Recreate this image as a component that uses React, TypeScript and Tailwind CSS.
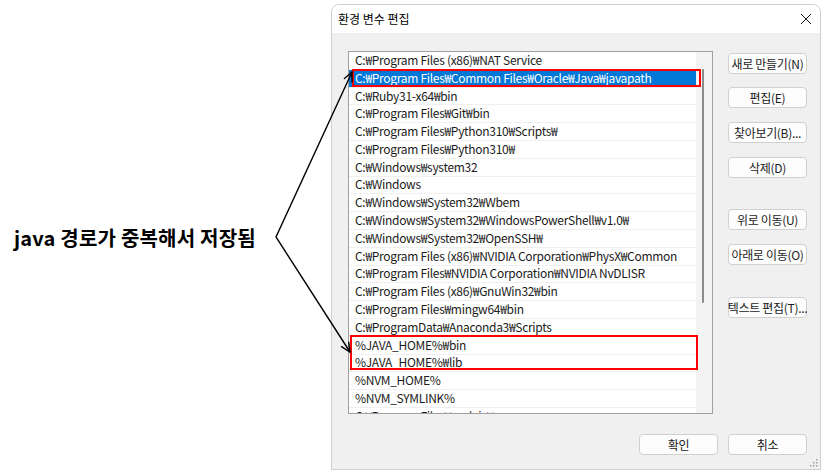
import React from "react"

const paths = [
  "C:₩Program Files (x86)₩NAT Service",
  "C:₩Program Files₩Common Files₩Oracle₩Java₩javapath",
  "C:₩Ruby31-x64₩bin",
  "C:₩Program Files₩Git₩bin",
  "C:₩Program Files₩Python310₩Scripts₩",
  "C:₩Program Files₩Python310₩",
  "C:₩Windows₩system32",
  "C:₩Windows",
  "C:₩Windows₩System32₩Wbem",
  "C:₩Windows₩System32₩WindowsPowerShell₩v1.0₩",
  "C:₩Windows₩System32₩OpenSSH₩",
  "C:₩Program Files (x86)₩NVIDIA Corporation₩PhysX₩Common",
  "C:₩Program Files₩NVIDIA Corporation₩NVIDIA NvDLISR",
  "C:₩Program Files (x86)₩GnuWin32₩bin",
  "C:₩Program Files₩mingw64₩bin",
  "C:₩ProgramData₩Anaconda3₩Scripts",
  "%JAVA_HOME%₩bin",
  "%JAVA_HOME%₩lib",
  "%NVM_HOME%",
  "%NVM_SYMLINK%",
  "C:₩Program Files₩nodejs₩",
]

const sideButtons = [
  { label: "새로 만들기(N)", mt: "mt-[2px]" },
  { label: "편집(E)", mt: "mt-[13px]" },
  { label: "찾아보기(B)...", mt: "mt-[14px]" },
  { label: "삭제(D)", mt: "mt-[14px]" },
  { label: "위로 이동(U)", mt: "mt-[31px]" },
  { label: "아래로 이동(O)", mt: "mt-[14px]" },
  { label: "텍스트 편집(T)...", mt: "mt-[32px]" },
]

function WinButton({ label, className = "" }: { label: string; className?: string }) {
  return (
    <div
      className={`flex h-[21px] w-[79px] items-center justify-center whitespace-nowrap rounded-[4px] border border-[#d0d0d0] bg-[#fdfdfd] text-[12px] tracking-[-0.3px] text-[#1b1b1b] ${className}`}
    >
      {label}
    </div>
  )
}

export default function App() {
  return (
    <div
      className="relative flex h-[474px] w-[825px] overflow-hidden bg-white"
      style={{ fontFamily: '"Noto Sans CJK KR", "Liberation Sans", sans-serif' }}
    >
      <div className="flex w-[331px] shrink-0 items-center pl-[14px]">
        <span className="mt-[2px] text-[20px] font-bold tracking-[0.2px] text-black">java 경로가 중복해서 저장됨</span>
      </div>

      <div className="mt-[4px] flex h-[466px] w-[490px] flex-col overflow-hidden rounded-t-[8px] border border-[#cfcfcf] bg-[#f0f0f0]">
        <div className="flex h-[28px] shrink-0 items-center justify-between bg-white pl-[6px] pr-[8px]">
          <span className="text-[12px] text-black">환경 변수 편집</span>
          <svg width="12" height="12" viewBox="0 0 12 12">
            <path d="M1 1L11 11M11 1L1 11" stroke="#1b1b1b" strokeWidth="1" />
          </svg>
        </div>

        <div className="relative flex flex-1 flex-col pl-[16px] pr-[13px] pt-[18px]">
          <div className="flex gap-[15px]">
            <div className="flex h-[363px] w-[366px] overflow-hidden border border-[#a0a0a0] bg-white">
              <div className="flex w-[348px] flex-col">
                {paths.map((p, i) => (
                  <div
                    key={p}
                    className={`flex h-[17.8px] shrink-0 items-center whitespace-nowrap border-b border-[#f0f0f0] pb-[1px] pl-[6px] text-[12px] tracking-[-0.3px] ${
                      i === 1 ? "bg-[#0078d7] text-white" : "text-[#1b1b1b]"
                    }`}
                  >
                    {p}
                  </div>
                ))}
              </div>
              <div className="relative w-[16px] bg-[#f3f3f3]">
                <div className="absolute left-[6px] top-[17px] h-[234px] w-[2px] rounded-full bg-[#8a8a8a]" />
              </div>
            </div>

            <div className="flex flex-col">
              {sideButtons.map((b) => (
                <WinButton key={b.label} label={b.label} className={b.mt} />
              ))}
            </div>
          </div>

          <div className="mt-[20px] flex justify-end gap-[10px]">
            <WinButton label="확인" className="border-[1.5px] border-[#0067c0]" />
            <WinButton label="취소" />
          </div>

          <svg width="8" height="8" viewBox="0 0 8 8" className="absolute bottom-[2px] right-[2px]">
            <rect x="6" y="0" width="1.5" height="1.5" fill="#a0a0a0" />
            <rect x="3" y="3" width="1.5" height="1.5" fill="#a0a0a0" />
            <rect x="6" y="3" width="1.5" height="1.5" fill="#a0a0a0" />
            <rect x="0" y="6" width="1.5" height="1.5" fill="#a0a0a0" />
            <rect x="3" y="6" width="1.5" height="1.5" fill="#a0a0a0" />
            <rect x="6" y="6" width="1.5" height="1.5" fill="#a0a0a0" />
          </svg>
        </div>
      </div>

      {/* annotation boxes */}
      <div className="pointer-events-none absolute left-[352px] top-[69px] h-[18px] w-[349px] border-2 border-[#ff0000]" />
      <div className="pointer-events-none absolute left-[350px] top-[335px] h-[35px] w-[348px] border-2 border-[#ff0000]" />

      <svg className="pointer-events-none absolute left-0 top-0" width="825" height="474" viewBox="0 0 825 474">
        <g stroke="#000" strokeWidth="1.4" fill="none" strokeLinecap="round">
          <path d="M352 72L276 237L350 352" />
          <path d="M344.4 78.5L352 72L352 82" />
          <path d="M341.5 346.7L350 352L348.7 342.1" />
        </g>
      </svg>
    </div>
  )
}
